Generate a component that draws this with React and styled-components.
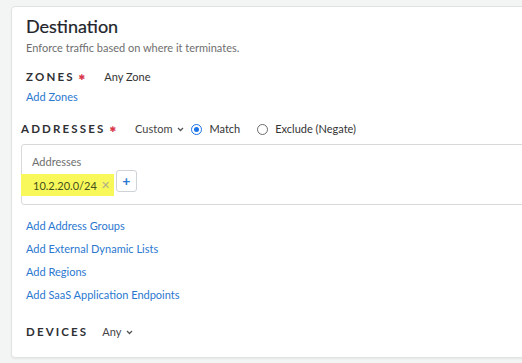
import React from "react";
import styled, { createGlobalStyle } from "styled-components";

const Global = createGlobalStyle`
  html, body { margin: 0; padding: 0; }
  body {
    background: #f3f4f4;
    font-family: Lato, "Open Sans", sans-serif;
    overflow: hidden;
    width: 522px;
    height: 363px;
  }
`;

const Page = styled.div`
  padding: 6px 0 0 11px;
`;

const Card = styled.section`
  width: 540px;
  box-sizing: border-box;
  background: #fff;
  border: 1px solid #e1e2e2;
  border-radius: 4px;
  box-shadow: 0 1px 2px rgba(0, 0, 0, 0.06);
  padding: 8px 0 17px 14px;
  display: flex;
  flex-direction: column;
`;

const Title = styled.h2`
  margin: 0;
  font-size: 18px;
  line-height: 22px;
  font-weight: 400;
  color: #23242b;
  -webkit-text-stroke: 0.2px #23242b;
`;

const Subtitle = styled.p`
  margin: 4px 0 0;
  font-size: 11px;
  line-height: 14px;
  color: #6e6e6e;
`;

const Row = styled.div`
  display: flex;
  align-items: center;
  height: ${(p) => p.$h || 16}px;
  margin-top: ${(p) => p.$mt || 0}px;
  margin-left: ${(p) => p.$ml || 0}px;
`;

const Label = styled.span`
  font-size: 11.5px;
  line-height: 16px;
  font-weight: 700;
  letter-spacing: 2.15px;
  color: #2f3035;
`;

const Star = styled.span`
  color: #d9364a;
  font-family: "DejaVu Sans", sans-serif;
  font-size: 8px;
  line-height: 16px;
  margin-left: 4px;
  transform: translateY(1px);
`;

const Value = styled.span`
  font-size: 11px;
  line-height: 16px;
  color: #333;
  margin-left: ${(p) => p.$ml || 0}px;
`;

const Link = styled.a`
  display: block;
  font-size: 11px;
  line-height: 14px;
  color: #2b78d0;
  text-decoration: none;
  margin-top: ${(p) => p.$mt || 0}px;
`;

const Select = styled.span`
  display: inline-flex;
  align-items: center;
  gap: 5px;
  font-size: 11px;
  line-height: 16px;
  color: #444;
  margin-left: ${(p) => p.$ml || 0}px;
`;

const Radio = styled.span`
  display: inline-flex;
  align-items: center;
  gap: 7px;
  font-size: 11px;
  line-height: 16px;
  color: #333;
  margin-left: ${(p) => p.$ml || 0}px;
`;

const Dot = styled.span`
  width: 11px;
  height: 11px;
  box-sizing: border-box;
  border-radius: 50%;
  border: ${(p) => (p.$on ? "1.5px solid #1a73e8" : "1px solid #6b6b6b")};
  display: inline-flex;
  align-items: center;
  justify-content: center;
  &::after {
    content: "";
    width: 5px;
    height: 5px;
    border-radius: 50%;
    background: ${(p) => (p.$on ? "#1a73e8" : "transparent")};
  }
`;

const Box = styled.div`
  margin: 5px 0 0 -5px;
  border: 1px solid #d9d9d9;
  border-radius: 3px;
  padding: 10px 0 8px 10px;
  height: 61px;
  box-sizing: border-box;
`;

const BoxLabel = styled.div`
  font-size: 11px;
  line-height: 14px;
  color: #6f6f6f;
`;

const TagRow = styled.div`
  display: flex;
  align-items: flex-start;
  margin: 1px 0 0 -11px;
  gap: 2px;
`;

const Tag = styled.span`
  display: inline-flex;
  align-items: center;
  height: 22px;
  margin-top: 4px;
  padding: 0 4px 0 12px;
  background: #f8f85a;
  font-size: 11px;
  color: #44501c;
  gap: 4px;
`;

const Close = styled.span`
  color: #b0b08a;
  font-size: 11px;
`;

const PlusBtn = styled.button`
  width: 21px;
  height: 22px;
  box-sizing: border-box;
  border: 1px solid #cfd2d6;
  border-radius: 3px;
  background: #fff;
  color: #2b78d0;
  font-family: Lato, sans-serif;
  font-size: 14px;
  font-weight: 700;
  line-height: 18px;
  padding: 0;
  display: flex;
  align-items: center;
  justify-content: center;
`;

const Chevron = () => (
  <svg width="7" height="5" viewBox="0 0 7 5">
    <path d="M1 1 L3.5 3.5 L6 1" fill="none" stroke="#555" strokeWidth="1.3" />
  </svg>
);

export default function App() {
  return (
    <>
      <Global />
      <Page>
        <Card>
          <Title>Destination</Title>
          <Subtitle>Enforce traffic based on where it terminates.</Subtitle>

          <Row $mt={14}>
            <Label>ZONES</Label>
            <Star>✱</Star>
            <Value $ml={19}>Any Zone</Value>
          </Row>
          <Link $mt={5}>Add Zones</Link>

          <Row $h={20} $mt={15} $ml={-5}>
            <Label>ADDRESSES</Label>
            <Star>✱</Star>
            <Select $ml={19}>
              Custom <Chevron />
            </Select>
            <Radio $ml={7}>
              <Dot $on />
              Match
            </Radio>
            <Radio $ml={17}>
              <Dot />
              Exclude (Negate)
            </Radio>
          </Row>

          <Box>
            <BoxLabel>Addresses</BoxLabel>
            <TagRow>
              <Tag>
                10.2.20.0/24 <Close>✕</Close>
              </Tag>
              <PlusBtn>+</PlusBtn>
            </TagRow>
          </Box>

          <Link $mt={14}>Add Address Groups</Link>
          <Link $mt={9}>Add External Dynamic Lists</Link>
          <Link $mt={9}>Add Regions</Link>
          <Link $mt={9}>Add SaaS Application Endpoints</Link>

          <Row $mt={22}>
            <Label>DEVICES</Label>
            <Select $ml={14}>
              Any <Chevron />
            </Select>
          </Row>
        </Card>
      </Page>
    </>
  );
}
